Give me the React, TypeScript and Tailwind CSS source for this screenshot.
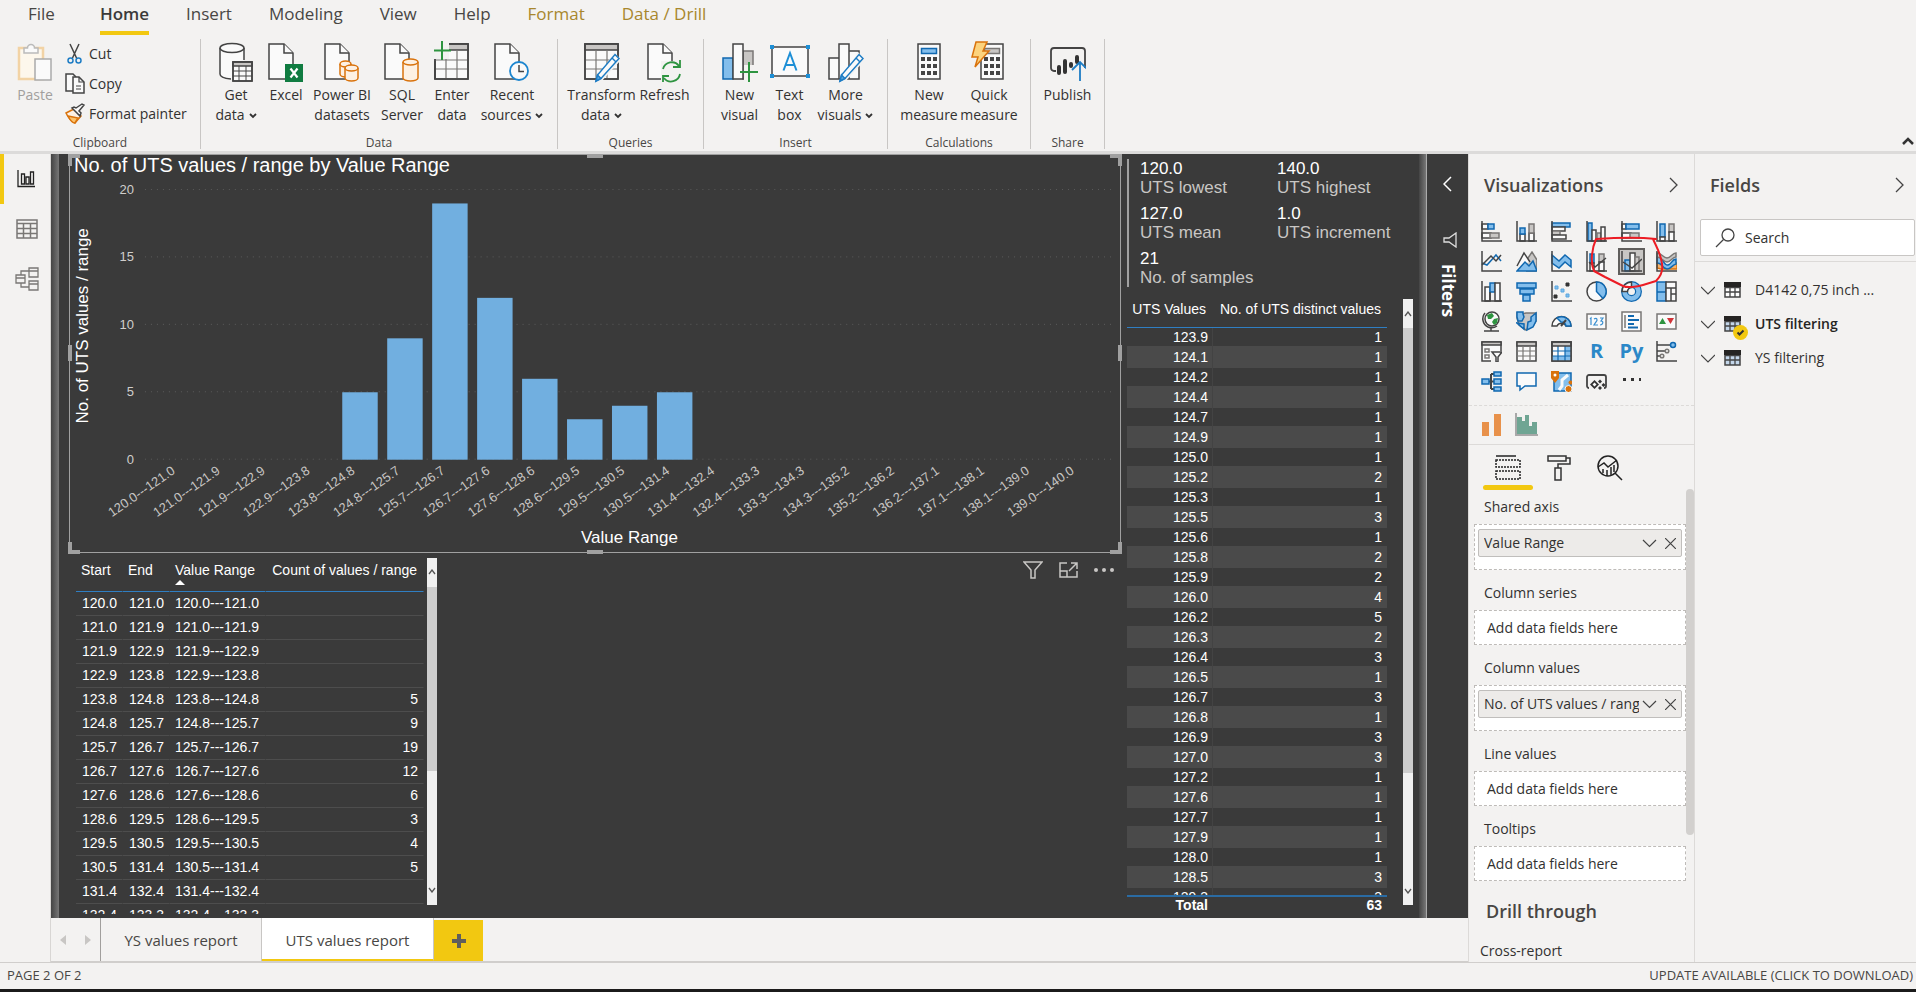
import React from "react";

const K = "#444";
const B = "#83beec";
const D = "#1068b0";
const G = "#c8c6c4";
const S = "#797775";
const W = "#fafafa";
const O = "#d9730d";
const N = "#2e9440";

type Kids = { children?: React.ReactNode };

function Svg({ w, h, children, className }: { w: number; h: number; className?: string } & Kids) {
  return (
    <svg
      width={w}
      height={h}
      viewBox={`0 0 ${w} ${h}`}
      fill="none"
      stroke={K}
      strokeWidth="1.5"
      className={className ?? "shrink-0"}
      aria-hidden="true"
    >
      {children}
    </svg>
  );
}

/* ---------- ribbon icons (36 x 42) ---------- */

const Big = ({ children }: Kids) => (
  <Svg w={36} h={42}>
    {children}
  </Svg>
);

const Page = ({ x = 4 }: { x?: number }) => (
  <g transform={`translate(${x} 0)`}>
    <path d="M1 3h15l9 9v26H1z" fill={W} />
    <path d="M16 3v9h9" fill={W} />
  </g>
);

const Cylinder = ({ x, y, w, h }: { x: number; y: number; w: number; h: number }) => (
  <g transform={`translate(${x} ${y})`} stroke={O} fill="#fdf1e4">
    <path d={`M0 3v${h - 6}a${w / 2} 3 0 0 0 ${w} 0V3`} />
    <ellipse cx={w / 2} cy="3" rx={w / 2} ry="3" />
  </g>
);

const PasteIcon = () => (
  <Big>
    <path d="M2 7h24v31H2z" fill="#fdf7ec" stroke="#f2d3a5" strokeWidth="2.5" />
    <path d="M7 12V7h3.500a3.500 3.500 0 0 1 7 0H21v5z" fill={W} stroke="#bbb" />
    <path d="M18 18h16v21H18z" fill={W} stroke="#aaa" />
  </Big>
);

const GetDataIcon = () => (
  <Big>
    <path d="M2 7v26c0 3 6 5 13 5h11V7" fill={W} stroke="none" />
    <path d="M2 7v26c0 3 5 4.500 11 5M26 7v12" />
    <ellipse cx="14" cy="7" rx="12" ry="4.500" fill={W} />
    <path d="M15 21h19v19H15z" fill={W} />
    <path d="M15 21h19v4H15z" fill={G} />
    <path d="M21 25v15M28 25v15M15 30h19M15 35h19" strokeWidth="1" />
    <path d="M15 21h19v19H15z" />
  </Big>
);

const ExcelIcon = () => (
  <Big>
    <Page x={0} />
    <path d="M17 23h18v18H17z" fill="#107c41" stroke="none" />
    <path d="M22.500 27.500l7 9M29.500 27.500l-7 9" stroke="#fff" strokeWidth="2.200" />
  </Big>
);

const DatasetsIcon = () => (
  <Big>
    <Page x={0} />
    <Cylinder x={16} y={20} w={11} h={16} />
    <Cylinder x={21} y={24} w={13} h={16} />
  </Big>
);

const SqlIcon = () => (
  <Big>
    <Page x={0} />
    <Cylinder x={19} y={18} w={15} h={22} />
  </Big>
);

const Grid = () => (
  <g>
    <path d="M1 3h33v35H1z" fill={W} />
    <path d="M1 3h33v6H1z" fill={G} />
    <path d="M12 9v29M23 9v29M1 19h33M1 28h33" stroke={S} strokeWidth="1.200" />
    <path d="M1 3h33v35H1z" />
  </g>
);

const EnterIcon = () => (
  <Big>
    <Grid />
    <path d="M0 0h15v18H0z" fill="#f3f2f1" stroke="none" />
    <path d="M8 0v19M0 9.500h17" stroke={N} strokeWidth="2" />
    <path d="M1 20v18" />
  </Big>
);

const RecentIcon = () => (
  <Big>
    <Page x={0} />
    <circle cx="25" cy="30" r="9" fill={W} stroke="#1d86cf" strokeWidth="1.800" />
    <path d="M25 24v6.500h5" />
  </Big>
);

const Pencil = () => (
  <g stroke="#1d7cc4">
    <path d="M31 13.500l4 4-18 20-5 2.500 1.500-6z" fill={W} />
    <path d="M13.500 34l3.500 3.500-5 2.500z" fill="#5aa7e0" />
    <path d="M28 17l4 4" />
  </g>
);

const TransformIcon = () => (
  <Big>
    <Grid />
    <path d="M30 11l7 8-20 22H12z" fill="#f3f2f1" stroke="none" />
    <Pencil />
  </Big>
);

const RefreshIcon = () => (
  <Big>
    <Page x={0} />
    <path d="M14 20h20v21H14z" fill="#f3f2f1" stroke="none" />
    <path
      d="M16 28a9 9 0 0 1 16-3M33 33a9 9 0 0 1-16 4M33 19v7h-7M16 41v-6h6"
      stroke={N}
      strokeWidth="1.800"
    />
  </Big>
);

const NewVisualIcon = () => (
  <Big>
    <path d="M1 17h10v21H1z" fill={B} stroke={D} />
    <path d="M21 10h10v28H21z" fill={G} stroke={S} />
    <path d="M11 3h10v35H11z" fill={W} />
    <path d="M22 24h14v18H22z" fill="#f3f2f1" stroke="none" />
    <path d="M27 21v20M18 31h18" stroke={N} strokeWidth="2" />
  </Big>
);

const TextBoxIcon = () => (
  <Svg w={42} h={42}>
    <path d="M3 6h36v29H3z" fill={W} />
    <path d="M1 4h4v4H1zM37 4h4v4h-4zM1 33h4v4H1zM37 33h4v4h-4z" fill="#1d8fd6" stroke="none" />
    <path d="M14.500 29.500L21 12l6.500 17.500M16.500 24h9" stroke="#1d8fd6" strokeWidth="2" />
  </Svg>
);

const MoreVisualsIcon = () => (
  <Big>
    <path d="M1 17h10v21H1zM21 10h10v28H21zM11 3h10v35H11z" fill={W} />
    <path d="M30 11l7 8-20 22H12z" fill="#f3f2f1" stroke="none" />
    <Pencil />
  </Big>
);

const CalcKeys = () => (
  <g>
    <path d="M7 3h22v35H7z" fill={W} />
    <path
      d="M10 16h4v4h-4zM16 16h4v4h-4zM22 16h4v4h-4zM10 23h4v4h-4zM16 23h4v4h-4zM22 23h4v4h-4zM10 30h4v4h-4zM16 30h4v4h-4zM22 30h4v4h-4z"
      fill={K}
      stroke="none"
    />
  </g>
);

const NewMeasureIcon = () => (
  <Big>
    <CalcKeys />
    <path d="M10.500 7.500h15v5h-15z" fill={B} stroke={D} />
  </Big>
);

const QuickMeasureIcon = () => (
  <Big>
    <g transform="translate(3 0)">
      <CalcKeys />
      <path d="M10.500 7.500h15v5h-15z" fill={G} stroke={S} />
    </g>
    <path d="M5 1h11l-4 9h6L4 26l3-10H1z" fill="#fcd37d" stroke={O} />
  </Big>
);

const PublishIcon = () => (
  <Svg w={36} h={42}>
    <path d="M6 30H4a3 3 0 0 1-3-3V10a3 3 0 0 1 3-3h28a3 3 0 0 1 3 3v17" strokeWidth="1.800" />
    <path d="M9 32v-6M15 31V20M21 25v-2M27 21v-5" stroke="#333" strokeWidth="4" strokeLinecap="round" />
    <path d="M30 40V21M22 29l8-8 8 8" stroke="#1d7cc4" strokeWidth="1.800" />
  </Svg>
);

const CutIcon = () => (
  <Svg w={20} h={22}>
    <path d="M5 1l7 15M14 1L7 16" />
    <circle cx="5.500" cy="17.500" r="2.500" stroke="#1d7cc4" />
    <circle cx="13.500" cy="17.500" r="2.500" stroke="#1d7cc4" />
  </Svg>
);

const CopyIcon = () => (
  <Svg w={20} h={22}>
    <path d="M8 18H1V1h7l3 3" fill={W} />
    <path d="M8 4h6l5 5v11H8z" fill={W} />
    <path d="M14 4v5h5M11 13h5M11 16h5" strokeWidth="1.200" />
  </Svg>
);

const PainterIcon = () => (
  <Svg w={20} h={22}>
    <path d="M1 10l8-4 7 7-6 7C7 19 3 14 1 10z" fill="#fdf1e4" stroke={O} />
    <path d="M3 13l10 2-3 5c-2 0-5-3-7-7z" fill="#fcc36b" stroke={O} />
    <path d="M7 5l8 8 1-3-2-2 5-6-2-1-6 4-2-1z" fill={W} />
  </Svg>
);

const Caret = () => (
  <svg width="8" height="6" viewBox="0 0 8 6" className="ml-1 inline-block align-middle" fill="none" stroke="#333" strokeWidth="1.800" aria-hidden="true">
    <path d="M1 1l3 3 3-3" />
  </svg>
);

/* ---------- ribbon ---------- */

function RibbonButton({ icon, top, bottom, caret, width, muted }: {
  icon: React.ReactNode;
  top: string;
  bottom?: string;
  caret?: boolean;
  width: string;
  muted?: boolean;
}) {
  return (
    <button
      className={`flex shrink-0 flex-col items-center whitespace-nowrap pt-[2px] text-sm leading-5 ${muted ? "text-[#a19f9d]" : "text-[#323130]"} ${width}`}
    >
      {icon}
      <span className="mt-[2px]">{top}</span>
      {bottom && (
        <span>
          {bottom}
          {caret && <Caret />}
        </span>
      )}
    </button>
  );
}

function RibbonGroup({ label, width, inset, children }: { label: string; width: string; inset?: string } & Kids) {
  return (
    <section className={`flex shrink-0 flex-col border-r border-[#c8c6c4] ${width}`}>
      <div className={`flex flex-1 ${inset ?? "justify-center"}`}>{children}</div>
      <h2 className="text-center text-xs leading-3 text-[#484644]">{label}</h2>
    </section>
  );
}

function SmallCommand({ icon, label }: { icon: React.ReactNode; label: string }) {
  return (
    <button className="flex h-[30px] items-center gap-1 whitespace-nowrap text-sm text-[#323130]">
      {icon}
      {label}
    </button>
  );
}

function Ribbon() {
  const tab = "flex h-7 items-center justify-center text-[17px] text-[#484644]";
  const gold = "flex h-7 items-center justify-center text-[17px] text-[#a8872d]";
  return (
    <header className="shrink-0 border-b-[3px] border-[#dcdbda] bg-[#f3f2f1]">
      <nav className="flex h-[35px] gap-[37px] pl-7">
        <button className={tab}>File</button>
        <button className="ml-2 flex h-[35px] flex-col justify-between border-b-4 border-[#f2c811] text-[17px] font-semibold leading-7 text-[#3b3a39]">
          Home
        </button>
        <button className={tab}>Insert</button>
        <button className={tab}>Modeling</button>
        <button className={tab}>View</button>
        <button className={tab}>Help</button>
        <button className={gold}>Format</button>
        <button className={gold}>Data / Drill</button>
      </nav>
      <div className="flex h-[116px] items-start pt-1">
        <div className="flex h-[110px] flex-1">
          <RibbonGroup label="Clipboard" width="w-[201px]">
            <div className="flex w-full pl-2">
              <RibbonButton icon={<PasteIcon />} top="Paste" width="w-[54px]" muted />
              <div className="flex flex-col pl-[3px]">
                <SmallCommand icon={<CutIcon />} label="Cut" />
                <SmallCommand icon={<CopyIcon />} label="Copy" />
                <SmallCommand icon={<PainterIcon />} label="Format painter" />
              </div>
            </div>
          </RibbonGroup>
          <RibbonGroup label="Data" width="w-[357px]" inset="pl-[5px]">
            <RibbonButton icon={<GetDataIcon />} top="Get" bottom="data" caret width="w-[60px]" />
            <RibbonButton icon={<ExcelIcon />} top="Excel" width="w-10" />
            <RibbonButton icon={<DatasetsIcon />} top="Power BI" bottom="datasets" width="w-[72px]" />
            <RibbonButton icon={<SqlIcon />} top="SQL" bottom="Server" width="w-12" />
            <RibbonButton icon={<EnterIcon />} top="Enter" bottom="data" width="w-[52px]" />
            <RibbonButton icon={<RecentIcon />} top="Recent" bottom="sources" caret width="w-[68px]" />
          </RibbonGroup>
          <RibbonGroup label="Queries" width="w-[146px]">
            <RibbonButton icon={<TransformIcon />} top="Transform" bottom="data" caret width="w-[68px]" />
            <RibbonButton icon={<RefreshIcon />} top="Refresh" width="w-[58px]" />
          </RibbonGroup>
          <RibbonGroup label="Insert" width="w-[184px]">
            <RibbonButton icon={<NewVisualIcon />} top="New" bottom="visual" width="w-12" />
            <RibbonButton icon={<TextBoxIcon />} top="Text" bottom="box" width="w-[52px]" />
            <RibbonButton icon={<MoreVisualsIcon />} top="More" bottom="visuals" caret width="w-[60px]" />
          </RibbonGroup>
          <RibbonGroup label="Calculations" width="w-[143px]">
            <RibbonButton icon={<NewMeasureIcon />} top="New" bottom="measure" width="w-[60px]" />
            <RibbonButton icon={<QuickMeasureIcon />} top="Quick" bottom="measure" width="w-[60px]" />
          </RibbonGroup>
          <RibbonGroup label="Share" width="w-[74px]">
            <RibbonButton icon={<PublishIcon />} top="Publish" width="w-[60px]" />
          </RibbonGroup>
        </div>
        <button aria-label="Collapse ribbon" className="self-end pb-[2px] pr-[2px]">
          <Svg w={12} h={16}>
            <path d="M1 11l5-5 5 5" stroke="#333" strokeWidth="2.500" />
          </Svg>
        </button>
      </div>
    </header>
  );
}

/* ---------- left rail ---------- */

function Rail() {
  return (
    <nav className="flex w-[51px] shrink-0 flex-col border-r border-[#d8d6d4] bg-[#f3f2f1]">
      <button aria-label="Report" className="flex h-[50px] items-center justify-center border-l-4 border-[#f2c811] pr-[2px]">
        <Svg w={18} h={18}>
          <path d="M1 0v16.500h17M4.500 4v10h3V4zM9 7v7h3V7zM13.500 2v12h3V2z" stroke="#222" strokeWidth="1.300" />
        </Svg>
      </button>
      <button aria-label="Data" className="flex h-[50px] items-center justify-center pl-[3px]">
        <Svg w={22} h={20}>
          <path d="M1 1h20v18H1zM1 4.500h20M1 9.500h20M1 14.500h20M7.500 4.500V19M14.500 4.500V19" stroke={S} />
        </Svg>
      </button>
      <button aria-label="Model" className="flex h-[50px] items-center justify-center pl-[3px]">
        <Svg w={24} h={24}>
          <path d="M1 8h9v8H1zM14 1h9v9h-9zM14 14h9v9h-9zM1 11h9M14 4h9M14 17h9M6 8V4h8M6 16v4h8" stroke={S} strokeWidth="1.300" />
        </Svg>
      </button>
    </nav>
  );
}

/* ---------- chart ---------- */

const ranges = [
  ["120.0", "121.0", 0],
  ["121.0", "121.9", 0],
  ["121.9", "122.9", 0],
  ["122.9", "123.8", 0],
  ["123.8", "124.8", 5],
  ["124.8", "125.7", 9],
  ["125.7", "126.7", 19],
  ["126.7", "127.6", 12],
  ["127.6", "128.6", 6],
  ["128.6", "129.5", 3],
  ["129.5", "130.5", 4],
  ["130.5", "131.4", 5],
  ["131.4", "132.4", 0],
  ["132.4", "133.3", 0],
  ["133.3", "134.3", 0],
  ["134.3", "135.2", 0],
  ["135.2", "136.2", 0],
  ["136.2", "137.1", 0],
  ["137.1", "138.1", 0],
  ["138.1", "139.0", 0],
  ["139.0", "140.0", 0],
] as const;

const BASE = 305;
const UNIT = 13.5;
const STEP = 45;

function Chart() {
  return (
    <div className="relative border border-[#a0a0a0]">
      <svg viewBox="0 0 1051 397" className="block w-full" role="img" aria-label="No. of UTS values / range by Value Range">
        <text x="4" y="17" fill="#fff" fontSize="20">No. of UTS values / range by Value Range</text>
        {[0, 5, 10, 15, 20].map((v) => (
          <g key={v}>
            <line x1="75" x2="1042" y1={BASE - v * UNIT - 0.5} y2={BASE - v * UNIT - 0.5} stroke="#5c5c5c" strokeDasharray="1 5" />
            <text x="64" y={BASE - v * UNIT + 4} fill="#d0cecc" fontSize="13" textAnchor="end">{v}</text>
          </g>
        ))}
        {ranges.map(([a, b, n], i) => (
          <g key={a}>
            {n > 0 && <rect x={92.5 + i * STEP} y={BASE - n * UNIT} width="35.500" height={n * UNIT} fill="#71afe0" />}
            <text
              transform={`translate(${106 + i * STEP} ${BASE + 13}) rotate(-35)`}
              fill="#c8c6c4"
              fontSize="13"
              textAnchor="end"
            >
              {`${a}---${b}`}
            </text>
          </g>
        ))}
        <text x="560" y="388" fill="#fff" fontSize="17" textAnchor="middle">Value Range</text>
        <text transform="translate(18 171) rotate(-90)" fill="#fff" fontSize="17" textAnchor="middle">
          No. of UTS values / range
        </text>
      </svg>
      <span className="absolute -left-0.5 -top-px h-3 w-3 border-l-4 border-t-4 border-[#a0a0a0]" />
      <span className="absolute -right-0.5 -top-px h-3 w-3 border-r-4 border-t-4 border-[#a0a0a0]" />
      <span className="absolute -bottom-0.5 -left-0.5 h-3 w-3 border-b-4 border-l-4 border-[#a0a0a0]" />
      <span className="absolute -bottom-0.5 -right-0.5 h-3 w-3 border-b-4 border-r-4 border-[#a0a0a0]" />
      <span className="absolute -top-px left-1/2 h-1 w-4 -translate-x-1/2 bg-[#a0a0a0]" />
      <span className="absolute -bottom-0.5 left-1/2 h-1 w-4 -translate-x-1/2 bg-[#a0a0a0]" />
      <span className="absolute -left-0.5 top-1/2 h-4 w-1 -translate-y-1/2 bg-[#a0a0a0]" />
      <span className="absolute -right-0.5 top-1/2 h-4 w-1 -translate-y-1/2 bg-[#a0a0a0]" />
    </div>
  );
}

/* ---------- tables ---------- */

function Scrollbar({ thumb }: { thumb: string }) {
  return (
    <div className="flex w-[10px] shrink-0 flex-col items-center bg-[#f0f0f0] text-[#555]">
      <div className="flex h-[29px] shrink-0 items-center">
        <Svg w={8} h={6}><path d="M1 5l3-4 3 4" stroke="#555" strokeWidth="1.300" /></Svg>
      </div>
      <div className={`w-full bg-[#cdcdcd] ${thumb}`} />
      <div className="mt-auto flex h-[29px] shrink-0 items-center">
        <Svg w={8} h={6}><path d="M1 1l3 4 3-4" stroke="#555" strokeWidth="1.300" /></Svg>
      </div>
    </div>
  );
}

function RangeTable() {
  const th = "h-[34px] whitespace-nowrap border-b border-r border-b-[#2f7ec2] border-r-[#3a3a3a] p-0 pt-[2px] align-top font-normal";
  const td = "h-6 border-b border-r border-b-[#4d4d4d] border-r-[#3a3a3a] p-0 leading-5";
  return (
    <div className="flex items-start gap-[3px]">
      <div className="h-[356px] overflow-hidden">
        <table className="w-[348px] table-fixed border-separate border-spacing-0 text-sm text-white">
          <colgroup>
            <col className="w-[47px]" />
            <col className="w-[47px]" />
            <col className="w-[96px]" />
            <col />
          </colgroup>
          <thead>
            <tr>
              <th className={`${th} pl-[5px] text-left`}>Start</th>
              <th className={`${th} pl-[5px] text-left`}>End</th>
              <th className={`${th} pl-[5px] text-left`}>
                Value Range
                <svg width="10" height="5" viewBox="0 0 10 5" className="block" aria-hidden="true">
                  <path d="M0 5l5-5 5 5z" fill="#fff" />
                </svg>
              </th>
              <th className={`${th} pr-[6px] text-right`}>Count of values / range</th>
            </tr>
          </thead>
          <tbody>
            {ranges.slice(0, 14).map(([a, b, n]) => (
              <tr key={a}>
                <td className={`${td} pr-[5px] text-right`}>{a}</td>
                <td className={`${td} pr-[5px] text-right`}>{b}</td>
                <td className={`${td} pl-[5px]`}>{`${a}---${b}`}</td>
                <td className={`${td} pr-[5px] text-right`}>{n || ""}</td>
              </tr>
            ))}
          </tbody>
        </table>
      </div>
      <div className="flex h-[347px]">
        <Scrollbar thumb="h-[184px]" />
      </div>
    </div>
  );
}

const distinct: [string, number][] = [
  ["123.9", 1], ["124.1", 1], ["124.2", 1], ["124.4", 1], ["124.7", 1], ["124.9", 1], ["125.0", 1],
  ["125.2", 2], ["125.3", 1], ["125.5", 3], ["125.6", 1], ["125.8", 2], ["125.9", 2], ["126.0", 4],
  ["126.2", 5], ["126.3", 2], ["126.4", 3], ["126.5", 1], ["126.7", 3], ["126.8", 1], ["126.9", 3],
  ["127.0", 3], ["127.2", 1], ["127.6", 1], ["127.7", 1], ["127.9", 1], ["128.0", 1], ["128.5", 3],
  ["129.3", 3],
];

function DistinctTable() {
  const th = "h-[38px] whitespace-nowrap border-b border-[#2f7ec2] p-0 font-normal";
  return (
    <div className="flex min-h-0 flex-1 items-start gap-4">
      <div className="w-[260px] text-sm text-white">
        <div className="h-[605px] overflow-hidden">
          <table className="w-full table-fixed border-separate border-spacing-0">
            <colgroup>
              <col className="w-[86px]" />
              <col />
            </colgroup>
            <thead>
              <tr>
                <th className={`${th} pr-[7px] text-right`}>UTS Values</th>
                <th className={`${th} pr-[6px] text-right`}>No. of UTS distinct values</th>
              </tr>
            </thead>
            <tbody>
              {distinct.map(([v, n], i) => (
                <tr key={v} className={i % 2 ? "h-[22px] bg-[#4a4a4a]" : "h-[18px]"}>
                  <td className="border-r border-[#434343] p-0 pr-1 text-right leading-[18px]">{v}</td>
                  <td className="p-0 pr-[5px] text-right leading-[18px]">{n}</td>
                </tr>
              ))}
            </tbody>
          </table>
        </div>
        <div className="flex justify-between border-t-2 border-[#2a6ba3] pr-[5px] font-bold leading-4">
          <span className="w-[81px] text-right">Total</span>
          <span>63</span>
        </div>
      </div>
      <div className="mt-[9px] flex h-[606px]">
        <Scrollbar thumb="h-[445px]" />
      </div>
    </div>
  );
}

function Kpi({ value, label }: { value: string; label: string }) {
  return (
    <div className="h-[45px] text-[17px] leading-[19px]">
      <div className="text-white">{value}</div>
      <div className="whitespace-nowrap text-[#c8c6c4]">{label}</div>
    </div>
  );
}

function Report() {
  return (
    <div className="flex min-h-0 flex-1 bg-[#3a3a3a] font-['Liberation_Sans',Arial,sans-serif]">
      <div className="w-2 shrink-0 bg-linear-to-r from-[#444] to-[#777]" />
      <main className="flex min-w-0 flex-1 overflow-hidden pl-[10px]">
        <div className="flex min-w-0 flex-1 flex-col">
          <Chart />
          <div className="flex justify-between pl-[7px] pr-[7px] pt-[5px]">
            <RangeTable />
            <div className="flex h-6 items-center gap-4">
              <button aria-label="Filters">
                <Svg w={20} h={18}><path d="M1 1h18l-7 8v8H8V9z" stroke="#c8c6c4" /></Svg>
              </button>
              <button aria-label="Focus mode">
                <Svg w={19} h={16}><path d="M8 1H1v14h17V9M1 9h7v6M12 1h6v6M18 1l-8 8" stroke="#c8c6c4" /></Svg>
              </button>
              <button aria-label="More options">
                <Svg w={20} h={4}>
                  <g fill="#c8c6c4" stroke="none"><circle cx="2" cy="2" r="2" /><circle cx="10" cy="2" r="2" /><circle cx="18" cy="2" r="2" /></g>
                </Svg>
              </button>
            </div>
          </div>
        </div>
        <aside className="flex w-[298px] shrink-0 flex-col pl-[6px] pt-[5px]">
          <div className="mb-[3px] grid h-[128px] grid-cols-[137px_1fr] border-l-2 border-[#a0a0a0] pl-[11px]">
            <Kpi value="120.0" label="UTS lowest" />
            <Kpi value="140.0" label="UTS highest" />
            <Kpi value="127.0" label="UTS mean" />
            <Kpi value="1.0" label="UTS increment" />
            <Kpi value="21" label="No. of samples" />
          </div>
          <DistinctTable />
        </aside>
      </main>
      <div className="w-2 shrink-0 border-r border-[#aaa] bg-linear-to-r from-[#444] to-[#777]" />
      <aside className="flex w-[41px] shrink-0 flex-col items-center pt-[22px] text-white">
        <button aria-label="Expand filters">
          <Svg w={9} h={16}><path d="M8 1L1 8l7 7" stroke="#fff" /></Svg>
        </button>
        <div className="ml-1 mt-[40px]">
          <Svg w={14} h={16}><path d="M13 1v14L6 10H1V6h5z" stroke="#ddd" strokeWidth="1.300" /></Svg>
        </div>
        <h2 className="mt-4 font-['Open_Sans',sans-serif] text-[17px] font-bold leading-6 [writing-mode:vertical-rl]">Filters</h2>
      </aside>
    </div>
  );
}

function PageTabs() {
  return (
    <div className="flex h-11 shrink-0 border-b border-[#d0cecc] bg-[#f3f2f1] text-[15px] text-[#484644]">
      <div className="flex w-[50px] items-center justify-around border-r border-[#a19f9d]">
        <button aria-label="Previous page"><Svg w={6} h={10}><path d="M6 0v10L0 5z" fill={G} stroke="none" /></Svg></button>
        <button aria-label="Next page"><Svg w={6} h={10}><path d="M0 0v10l6-5z" fill={G} stroke="none" /></Svg></button>
      </div>
      <button className="w-[161px] border-r border-[#c8c6c4] pt-[2px]">YS values report</button>
      <button className="w-[172px] border-b-2 border-r border-b-[#f2c811] border-r-[#c8c6c4] bg-white pt-1">UTS values report</button>
      <button aria-label="New page" className="mt-[2px] flex w-[49px] items-center justify-center bg-[#f2c811]">
        <Svg w={14} h={14}><path d="M7 0v14M0 7h14" stroke="#605e5c" strokeWidth="4" /></Svg>
      </button>
    </div>
  );
}

/* ---------- visualizations pane ---------- */

const Axes = () => <path d="M1 0v20h20" />;

const visuals: [string, React.ReactNode][] = [
  ["Stacked bar chart", <><path d="M1 3h6v5H1z" fill={W} /><path d="M7 3h6v5H7z" fill={B} stroke={D} /><path d="M1 12h9v5H1z" fill={W} /><path d="M9 12h9v5H9z" fill={G} stroke={S} /><Axes /></>],
  ["Stacked column chart", <><path d="M4 13h5v7H4z" fill={W} /><path d="M4 7h5v6H4z" fill={B} stroke={D} /><path d="M13 12h5v8h-5z" fill={W} /><path d="M13 3h5v9h-5z" fill={G} stroke={S} /><Axes /></>],
  ["Clustered bar chart", <><path d="M1 2h18v4H1z" fill={B} stroke={D} /><path d="M1 6h13v4H1z" fill={W} /><path d="M1 10h8v4H1z" fill={G} stroke={S} /><path d="M1 14h14v4H1z" fill={W} /><Axes /></>],
  ["Clustered column chart", <><path d="M2 2h4v18H2z" fill={B} stroke={D} /><path d="M6 9h4v11H6z" fill={W} /><path d="M11 12h4v8h-4z" fill={G} stroke={S} /><path d="M15 6h4v14h-4z" fill={W} /><Axes /></>],
  ["100% stacked bar chart", <><path d="M1 3h4v5H1z" fill={W} /><path d="M5 3h13v5H5z" fill={B} stroke={D} /><path d="M1 12h9v5H1z" fill={W} /><path d="M9 12h9v5H9z" fill={G} stroke={S} /><Axes /></>],
  ["100% stacked column chart", <><path d="M4 3h5v13H4z" fill={B} stroke={D} /><path d="M4 16h5v4H4z" fill={W} /><path d="M13 3h5v8h-5z" fill={G} stroke={S} /><path d="M13 11h5v9h-5z" fill={W} /><Axes /></>],
  ["Line chart", <><path d="M1 12l5 2 9-10 5 6" stroke={D} /><path d="M1 14l9-9 5 5 5-6" /><Axes /></>],
  ["Area chart", <><path d="M10 10l6-9 5 8v11H10" fill={G} stroke={S} /><path d="M1 15L8 2l6 9" fill={W} /><path d="M1 20l8-9 4 4 4-5 4 10z" fill={B} stroke={D} /></>],
  ["Stacked area chart", <><path d="M1 4l7 6 6-6 6 5v7l-6-5-6 6-7-5z" fill={B} stroke={D} /><Axes /></>],
  ["Line and stacked column chart", <><path d="M4 3h4v9H4z" fill={B} stroke={D} /><path d="M4 12h4v8H4z" fill={W} /><path d="M13 3h5v8h-5z" fill={G} stroke={S} /><path d="M13 11h5v9h-5z" fill={W} /><path d="M3 11l6 5 11-9" /><Axes /></>],
  ["Line and clustered column chart", <><path d="M4 9h5v11H4z" fill={B} stroke={D} /><path d="M9 2h5v18H9z" fill={W} /><path d="M14 6h4v14h-4z" fill={G} stroke={S} /><path d="M2 11l9 6 10-9" /><Axes /></>],
  ["Ribbon chart", <><path d="M1 12h6l3 4h4l3-4h4v6h-4H5L1 17z" fill="#f5b26b" stroke={O} /><path d="M1 6c6-2 6 9 11 8 4-1 4-6 8-6v5c-4 1-5 5-9 5C6 18 6 11 1 12z" fill={B} stroke={D} /><path d="M1 2c5 0 6 5 10 5s5-5 9-5v4c-4 0-5 5-9 5S6 6 1 6z" fill={G} stroke={S} /><path d="M1 0v20h20" /></>],
  ["Waterfall chart", <><path d="M4 6h5v14H4z" fill={W} /><path d="M9 2h5v9H9z" fill={B} stroke={D} /><path d="M14 2h5v18h-5z" fill={W} /><path d="M9 11v9" /><Axes /></>],
  ["Funnel chart", <path d="M1 2h19v5H1zM4 8h14v5H4zM7 14h7v6H7z" fill={B} stroke={D} />],
  ["Scatter chart", <><path d="M3 14h3v3H3zM15 2h3v3h-3z" fill="#333" stroke="#333" strokeWidth="1" /><path d="M4 5h3v3H4zM10 8h3v3h-3zM15 13h3v3h-3z" fill={B} stroke="#5aa7e0" strokeWidth="1" /><Axes /></>],
  ["Pie chart", <><circle cx="10.500" cy="10.500" r="9.500" fill={W} /><path d="M10.500 1a9.500 9.500 0 0 1 6.500 16.500l-6.500-7z" fill={B} stroke={D} /></>],
  ["Donut chart", <><circle cx="10.500" cy="10.500" r="7" stroke={D} strokeWidth="7" /><circle cx="10.500" cy="10.500" r="7" stroke={B} strokeWidth="4.500" /><path d="M1 10.500h5.500A4 4 0 0 1 10.500 6.500V1A9.500 9.500 0 0 0 1 10.500z" fill={W} /></>],
  ["Treemap", <><path d="M1 1h9v19H1z" fill={B} stroke={D} /><path d="M1 11h9" stroke={D} /><path d="M10 1h10v19H10z" fill={W} /><path d="M10 7h10M15 7v13M15 13h5" /></>],
  ["Map", <><circle cx="11" cy="8" r="7" fill={W} /><path d="M6 4l5-2 2 3-3 3-3 0zM13 8l4-1-1 5-3 2-2-3z" fill={N} stroke="none" /><path d="M4 2a9 9 0 0 0 3 14 9 9 0 0 0 9-1M10 17v3M3 20h15" /></>],
  ["Filled map", <><path d="M1 2l5 1 4-1h10v8l-3 5-7 4-7-5-2-7z" fill={G} stroke={S} /><path d="M1 1h6v2l1 3-2 4H2L1 6zM12 11l3-1V6l5-4v8l-3 6-6 3zM1 12l7 1v5z" fill={B} stroke={D} /></>],
  ["Gauge", <><path d="M1 15a9.500 9.500 0 0 1 19 0h-5a5 5 0 0 0-9 0z" fill={W} /><path d="M6 7a9.500 9.500 0 0 1 14 8h-5a5 5 0 0 0-5-4z" fill={B} stroke={D} /><path d="M10 15l5-6" strokeWidth="2" /></>],
  ["Card", <><path d="M1 3h19v15H1z" fill={W} stroke={S} /><path d="M4 8l1-1v7M8 8c3-2 4 1 2 3l-2 3h4M14 7h3l-2 3c3 0 2 4-1 4" stroke="#3a8fd0" strokeWidth="1.200" /></>],
  ["Multi-row card", <><path d="M1 1h19v19H1z" fill={W} stroke={S} /><path d="M4 4v13" stroke={S} /><path d="M7 5h6M7 13h6" strokeWidth="2" stroke={D} /><path d="M7 9h11M7 16.500h10" strokeWidth="2" stroke={D} /></>],
  ["KPI", <><path d="M1 3h19v15H1z" fill={W} stroke={S} /><path d="M3 13l3.500-6 3.500 6z" fill={N} stroke="none" /><path d="M11 7h7l-3.500 6z" fill="#d13438" stroke="none" /></>],
  ["Slicer", <><path d="M1 1h19v19H1z" fill={W} /><path d="M1 1h19v3H1z" fill={G} /><path d="M4 8h4v3H4zM4 14h4v3H4z" stroke={S} /><path d="M10 10h12v11H10z" fill="#f3f2f1" stroke="none" /><path d="M11 11h10l-4 5v5h-2v-5z" fill={W} /></>],
  ["Table", <><path d="M1 1h19v19H1z" fill={W} /><path d="M1 1h19v4H1z" fill={G} /><path d="M1 10h19M1 15h19M7 5v15M14 5v15" stroke={S} strokeWidth="1.200" /></>],
  ["Matrix", <><path d="M1 1h19v19H1z" fill={W} /><path d="M14 5h6v15H1v-5h13z" fill={B} stroke="none" /><path d="M1 10h19M1 15h19M7 5v15M14 5v15" stroke={D} strokeWidth="1.200" /><path d="M1 1h19v4H1z" fill={G} /><path d="M1 1h19v19H1z" /></>],
  ["R script visual", "R"],
  ["Python visual", "Py"],
  ["Key influencers", <><Axes /><path d="M1 4h13M1 10h8M1 15h3" /><circle cx="17" cy="4" r="2.500" fill={B} stroke={D} /><circle cx="11" cy="10" r="1.800" stroke={S} /><circle cx="6" cy="15" r="1.800" stroke={S} /></>],
  ["Decomposition tree", <><path d="M8 10.500h5M10 3v15M10 3h4M10 18h4" strokeWidth="2" /><path d="M1 8h7v5H1zM13 1h7v4h-7zM13 8h7v5h-7zM13 16h7v4h-7z" fill={B} stroke={D} /></>],
  ["Q&A", <path d="M1 2h19v13H9l-5 4v-4H1z" fill={W} stroke={D} />],
  ["ArcGIS map", <><path d="M3 2h17v18H3z" fill={B} stroke={D} /><path d="M8 19l3-4V9l6-5" stroke={W} strokeWidth="3" /><path d="M0 0h8v7L4 12 0 7z" fill={O} stroke="none" /><circle cx="4" cy="4" r="1.500" fill="#fff" stroke="none" /><circle cx="17.500" cy="18" r="3.500" fill={O} stroke="#f3f2f1" strokeWidth="1" /><circle cx="19.500" cy="11.500" r="2" fill={O} stroke="none" /></>],
  ["Power Apps", <><path d="M3 17a2 2 0 0 1-2-2V6a2 2 0 0 1 2-2h15a2 2 0 0 1 2 2v9a2 2 0 0 1-2 2" strokeWidth="1.800" /><path d="M8.500 9l4.500 4.500L8.500 18 4 13.500zM14 8.500l2 2-2 2-2-2zM17.500 12l2 2-2 2-2-2zM14 15l2 2-2 2-2-2z" fill="#333" stroke="none" /><path d="M8.500 11.500l2 2-2 2-2-2z" fill={W} stroke="none" /></>],
];

function Chevron() {
  return <Svg w={9} h={16}><path d="M1 1l7 7-7 7" strokeWidth="1.300" /></Svg>;
}

function Well({ label, field }: { label: string; field?: string }) {
  return (
    <div className="pb-[6px]">
      <h3 className="flex h-[34px] items-center pl-[15px] text-sm text-[#323130]">{label}</h3>
      <div className={`ml-[5px] mr-2 border border-dashed border-[#bebbb8] bg-white ${field ? "h-[46px] px-[3px] pt-1" : "h-[35px]"}`}>
        {field ? (
          <div className="flex h-7 items-center rounded-xs border border-[#c0bebc] bg-[#edebe9] pl-[5px] pr-[5px] text-sm text-[#323130]">
            <span className="min-w-0 flex-1 overflow-hidden whitespace-nowrap">{field}</span>
            <button aria-label={`${field} options`} className="ml-[3px]">
              <Svg w={15} h={9}><path d="M1 1l6.500 6.500L14 1" strokeWidth="1.200" /></Svg>
            </button>
            <button aria-label={`Remove ${field}`} className="ml-2">
              <Svg w={11} h={11}><path d="M0 0l11 11M11 0L0 11" strokeWidth="1.200" /></Svg>
            </button>
          </div>
        ) : (
          <p className="pl-3 text-sm leading-[33px] text-[#323130]">Add data fields here</p>
        )}
      </div>
    </div>
  );
}

function Visualizations() {
  return (
    <aside className="relative flex w-[227px] shrink-0 flex-col overflow-hidden border-x border-[#dcdad8]">
      <div className="flex h-[61px] shrink-0 items-center justify-between pl-[15px] pr-4">
        <h2 className="text-lg font-semibold text-[#484644]">Visualizations</h2>
        <button aria-label="Collapse visualizations"><Chevron /></button>
      </div>
      <div className="grid shrink-0 grid-cols-[repeat(6,35px)] auto-rows-[30px] pl-[5px] pt-px">
        {visuals.map(([name, icon], i) => (
          <button
            key={name}
            aria-label={name}
            className={`flex h-[27px] w-[27px] items-center justify-center self-center justify-self-center ${i === 10 ? "border-2 border-[#605e5c] bg-[#c8c6c4]" : ""}`}
          >
            {typeof icon === "string" ? (
              <span className="text-xl font-bold leading-5 text-[#2b88c8]">{icon}</span>
            ) : (
              <Svg w={21} h={21}>{icon}</Svg>
            )}
          </button>
        ))}
        <button aria-label="More visuals" className="flex items-center justify-center pb-1">
          <Svg w={18} h={3}><path d="M0 0h3v3H0zM8 0h3v3H8zM16 0h2v3h-2z" fill="#333" stroke="none" /></Svg>
        </button>
      </div>
      <div className="mt-[9px] flex h-[40px] shrink-0 items-center gap-[13px] border-b border-t border-b-[#dcdad8] border-t-[#dcdad8] pl-[13px] [border-top-style:dashed]">
        <button aria-label="Custom column visual">
          <Svg w={20} h={24}><path d="M0 9h7v14H0zM12 1h7v22h-7z" fill="#e8914a" stroke="none" /></Svg>
        </button>
        <button aria-label="Histogram">
          <Svg w={23} h={24}><path d="M2 4h5v4h3V2h4v11h3V9h5v12H2z" fill="#6fa593" stroke="none" /><path d="M1 0v22h22" stroke="#a8a8a8" strokeWidth="2" /></Svg>
        </button>
      </div>
      <div className="flex shrink-0 gap-px pl-[14px]">
        <button aria-label="Fields" className="flex h-[45px] w-[50px] flex-col items-center">
          <span className="flex flex-1 items-end pb-1">
            <Svg w={26} h={26}><path d="M1 1h20" stroke="#222" /><path d="M1 5h24v7H1zM1 16h24v8H1z" stroke="#222" strokeDasharray="2 1" /></Svg>
          </span>
          <span className="h-[5px] w-full rounded-full bg-[#f2c811]" />
        </button>
        <button aria-label="Format" className="flex h-[45px] w-[50px] items-center justify-center">
          <Svg w={24} h={26}><path d="M1 1h18v5H1zM19 3h4v6H11v4M8 13h6v12H8z" stroke="#333" /></Svg>
        </button>
        <button aria-label="Analytics" className="flex h-[45px] w-[50px] items-center justify-center">
          <Svg w={26} h={26}><circle cx="11" cy="11" r="10" stroke="#222" /><path d="M18 18l7 7M1 12l6-4 4 4 9-7M6 14v4M10 15v6M14 12v8M17 10v7" stroke="#222" /></Svg>
        </button>
      </div>
      <div className="min-h-0 flex-1 overflow-hidden">
        <Well label="Shared axis" field="Value Range" />
        <Well label="Column series" />
        <Well label="Column values" field="No. of UTS values / range" />
        <Well label="Line values" />
        <Well label="Tooltips" />
        <h2 className="pl-[17px] pt-[10px] text-lg font-semibold leading-[28px] text-[#484644]">Drill through</h2>
        <p className="pl-[11px] pt-[15px] text-sm leading-[22px] text-[#323130]">Cross-report</p>
      </div>
      <span className="absolute right-0 top-[335px] h-[346px] w-2 rounded-full bg-[#d2d0ce]" />
      <svg width="80" height="60" viewBox="0 0 80 60" className="absolute left-[118px] top-[80px]" fill="none" stroke="#ec1c24" strokeWidth="2" strokeLinecap="round" strokeLinejoin="round" aria-hidden="true">
        <path d="M69 5C50 3 25 4 9 5C5 14 3 28 7 37L18 43L36 52C40 54 50 53 56 51L69 47C74 42 76 36 75 30C74 20 70 14 66 5" />
      </svg>
    </aside>
  );
}

/* ---------- fields pane ---------- */

function FieldRow({ name, tint, bold, checked }: { name: string; tint: string; bold?: boolean; checked?: boolean }) {
  return (
    <li>
      <button className={`flex h-[34px] w-full items-center pl-[6px] text-left text-sm ${bold ? "font-semibold text-[#252423]" : "text-[#323130]"}`}>
        <Svg w={14} h={9}><path d="M0 1l7 7 7-7" strokeWidth="1.200" /></Svg>
        <span className="relative ml-[9px]">
          <Svg w={17} h={16}>
            <path d="M1 1h15v14H1z" fill={tint} />
            <path d="M1 5.500h15M1 10h15M6 4v11M11 4v11" strokeWidth="1.300" />
            <path d="M0 0h17v5H0z" fill="#252423" stroke="none" />
          </Svg>
          {checked && (
            <span className="absolute left-[9px] top-[9px]">
              <Svg w={15} h={15}>
                <circle cx="7.500" cy="7.500" r="7.500" fill="#f2c811" stroke="none" />
                <path d="M4.500 7.500l2 2 4-4" stroke="#333" strokeWidth="2" />
              </Svg>
            </span>
          )}
        </span>
        <span className="ml-[14px]">{name}</span>
      </button>
    </li>
  );
}

function Fields() {
  return (
    <aside className="flex w-[221px] shrink-0 flex-col">
      <div className="flex h-[61px] items-center justify-between pl-[15px] pr-3">
        <h2 className="text-lg font-semibold text-[#484644]">Fields</h2>
        <button aria-label="Collapse fields"><Chevron /></button>
      </div>
      <div className="border-b border-[#dcdad8] pb-[5px] pl-[5px] pr-px pt-1">
        <label className="flex h-[37px] items-center gap-[10px] rounded-xs border border-[#c8c6c4] bg-white pl-[14px]">
          <Svg w={20} h={20}><circle cx="13" cy="7" r="6" strokeWidth="1.300" /><path d="M8.500 11.500L1 19" strokeWidth="1.300" /></Svg>
          <input
            type="search"
            aria-label="Search"
            placeholder="Search"
            className="min-w-0 flex-1 bg-transparent text-sm text-[#323130] outline-none placeholder:text-[#323130]"
          />
        </label>
      </div>
      <ul className="pt-[11px]">
        <FieldRow name="D4142 0,75 inch ..." tint="#fff" />
        <FieldRow name="UTS filtering" tint="#c3d6ea" bold checked />
        <FieldRow name="YS filtering" tint="#c3d6ea" />
      </ul>
    </aside>
  );
}

export default function App() {
  return (
    <div className="flex h-screen flex-col overflow-hidden bg-[#f3f2f1] font-['Open_Sans','Segoe_UI',sans-serif]">
      <Ribbon />
      <div className="flex min-h-0 flex-1">
        <Rail />
        <div className="flex min-w-0 flex-1 flex-col">
          <Report />
          <PageTabs />
        </div>
        <Visualizations />
        <Fields />
      </div>
      <footer className="flex h-[30px] shrink-0 items-center justify-between border-b-[3px] border-t border-b-[#1b1b1b] border-t-[#d0cecc] pl-[7px] pr-[3px] text-[13px] text-[#484644]">
        <span>PAGE 2 OF 2</span>
        <button>UPDATE AVAILABLE (CLICK TO DOWNLOAD)</button>
      </footer>
    </div>
  );
}
